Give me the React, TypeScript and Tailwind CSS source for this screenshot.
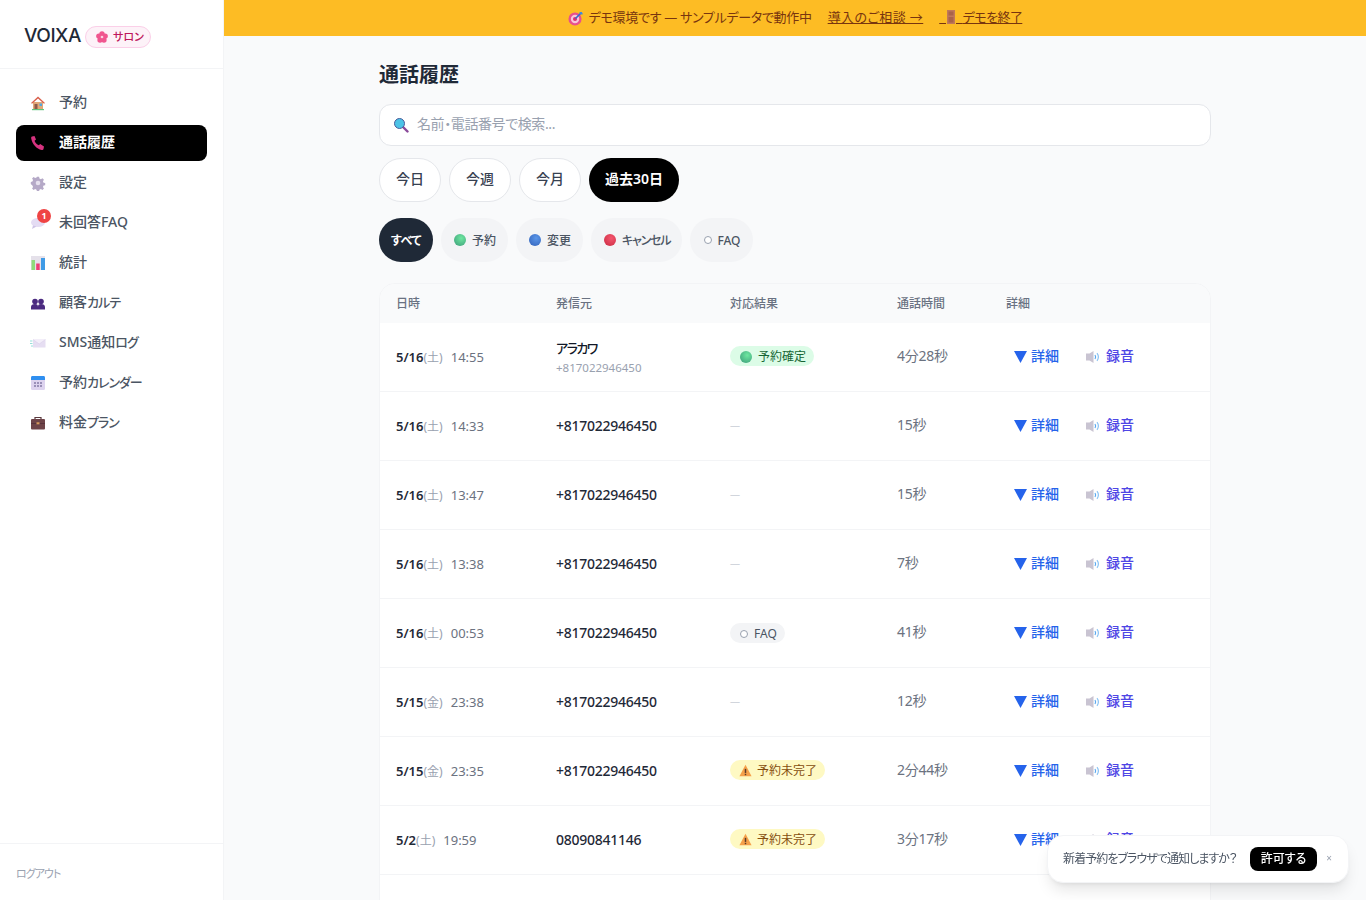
import type { ReactNode } from 'react';

const FONT = { fontFamily: '"Noto Sans", "Noto Sans CJK JP", sans-serif', fontFeatureSettings: '"palt"' };

const House = () => (
  <svg width="16" height="16" viewBox="0 0 16 16">
    <rect x="2" y="14" width="12" height="1.2" fill="#5fc47f" />
    <path d="M3 7h10v7H3z" fill="#e2a878" />
    <path d="M8 1.5 15 8l-1 .8L8 3.4 2 8.800 1 8z" fill="#d9604c" />
    <rect x="4.500" y="9" width="3" height="5" fill="#8d5a4a" />
    <rect x="9.500" y="8.500" width="2.500" height="2.500" fill="#4fa8e0" />
  </svg>
);

const Phone = () => (
  <svg width="16" height="16" viewBox="0 0 16 16">
    <path d="M2 1.500 4.500 1l1.500 3.500-1.500 1.200c.8 2 2.300 3.600 4.300 4.600l1.400-1.300L14 11.500 13.500 14c-.2.800-1 1.200-1.800 1C6.500 13.800 2.500 9.500 1.200 3.500 1 2.600 1.300 1.800 2 1.500Z" fill="#d6337f" />
  </svg>
);

const Gear = () => (
  <svg width="16" height="16" viewBox="0 0 16 16">
    <path d="M6.800 1h2.400l.4 2 1.600.7 1.700-1.100 1.700 1.700-1.100 1.700.7 1.600 1.800.4v2.400l-1.800.4-.7 1.600 1.100 1.700-1.700 1.700-1.700-1.100-1.600.7-.4 1.800H6.800l-.4-1.800-1.600-.7-1.700 1.100-1.700-1.700 1.100-1.700-.7-1.600L0 9.200V6.800l1.800-.4.700-1.600-1.100-1.700 1.700-1.700 1.700 1.100 1.600-.7Z" fill="#b5a9c7" transform="translate(.8 .8) scale(.9)" />
    <circle cx="8" cy="8" r="2.300" fill="#e6e0ee" />
  </svg>
);

const Bubble = () => (
  <svg width="16" height="16" viewBox="0 0 16 16">
    <ellipse cx="8" cy="7.500" rx="7" ry="4.500" fill="#e4dcf3" />
    <path d="M3 10.500 2 14l4.500-2.500Z" fill="#cfc4e6" />
  </svg>
);

const Chart = () => (
  <svg width="16" height="16" viewBox="0 0 16 16">
    <rect x="1" y="1" width="14" height="14" fill="#e5e1ea" />
    <rect x="1.500" y="5" width="3.500" height="10" fill="#8fdc7a" />
    <rect x="6.200" y="8.500" width="3.500" height="6.500" fill="#ef3f74" />
    <rect x="11" y="3" width="4" height="12" fill="#3f9be6" />
  </svg>
);

const Busts = () => (
  <svg width="16" height="16" viewBox="0 0 16 16">
    <circle cx="5" cy="6.500" r="2.800" fill="#4b2a80" />
    <circle cx="11" cy="6.500" r="2.800" fill="#4b2a80" />
    <path d="M1 14.500v-2.500C1 10.300 2.500 9 5 9s3 1.300 3 3v2.500ZM8 14.500v-2.500c0-1.700.5-3 3-3s4 1.300 4 3v2.500Z" fill="#4b2a80" />
  </svg>
);

const Envelope = () => (
  <svg width="16" height="16" viewBox="0 0 16 16">
    <rect x="3" y="4.500" width="12.500" height="8" fill="#e6def2" />
    <path d="m3 4.500 6.200 4.500 6.300-4.500" fill="#f3eef9" stroke="#d6cae8" strokeWidth=".5" />
    <path d="M0 6h2.500M0 8.500h2.500M1 11h2" stroke="#7fd6d0" strokeWidth=".8" />
  </svg>
);

const Calendar = () => (
  <svg width="16" height="16" viewBox="0 0 16 16">
    <rect x="1" y="1" width="14" height="14" rx="1.500" fill="#ddd3ef" />
    <path d="M1 5V2.500C1 1.700 1.700 1 2.500 1h11c.8 0 1.500.7 1.500 1.500V5Z" fill="#2f8ff0" />
    <path d="M4 7h2v2H4zM7 7h2v2H7zM10 7h2v2h-2zM4 10h2v2H4zM7 10h2v2H7zM10 10h2v2h-2z" fill="#9a90b8" />
  </svg>
);

const Briefcase = () => (
  <svg width="16" height="16" viewBox="0 0 16 16">
    <path d="M5 4V2.500h6V4" fill="none" stroke="#5a3a3e" strokeWidth="1.200" />
    <rect x="1" y="4" width="14" height="10.500" rx="1" fill="#6e4348" />
    <rect x="1" y="8" width="14" height=".8" fill="#54303a" />
    <rect x="6.500" y="7.300" width="3" height="2" fill="#d79a5c" />
  </svg>
);

const Magnifier = () => (
  <svg width="16" height="16" viewBox="0 0 16 16">
    <path d="m10 10 4.500 4.500" stroke="#8a4a9a" strokeWidth="2.400" strokeLinecap="round" />
    <circle cx="6.500" cy="6.500" r="5" fill="#4cc3e6" stroke="#4a5a9a" strokeWidth="1" />
  </svg>
);

const Dart = () => (
  <svg width="15" height="15" viewBox="0 0 16 16">
    <circle cx="7.500" cy="8.500" r="7" fill="#e8508c" />
    <circle cx="7.500" cy="8.500" r="4.500" fill="#f6c6dc" />
    <circle cx="7.500" cy="8.500" r="2.200" fill="#d92f70" />
    <path d="M8 8 14 2" stroke="#2f6fd0" strokeWidth="1.600" />
    <path d="m12 1 1 2 2 1 1-1-1-1V1Z" fill="#3f8be0" />
  </svg>
);

const Door = () => (
  <svg width="10" height="16" viewBox="3 0 10 16" className="inline align-[-3px]">
    <rect x="4" y="1" width="8" height="14" fill="#c0785a" />
    <rect x="5.500" y="2.500" width="5" height="4" fill="#a9634a" />
    <rect x="5.500" y="8" width="5" height="5.500" fill="#a9634a" />
  </svg>
);

const Warning = () => (
  <svg width="13" height="13" viewBox="0 0 16 16">
    <path d="M8 1 15.500 15H.5Z" fill="#f5a04a" />
    <rect x="7.100" y="6" width="1.800" height="5" fill="#5a3a2a" />
    <rect x="7.100" y="12" width="1.800" height="1.800" fill="#5a3a2a" />
  </svg>
);

const Speaker = () => (
  <svg width="14" height="14" viewBox="0 0 14 14">
    <path d="M0 3.500h3.500L7.500 1v12L3.500 10.500H0Z" fill="#c9c4d2" />
    <path d="M9 5c.8 1.200.8 2.800 0 4" fill="none" stroke="#5aa8ef" strokeWidth="1.200" />
    <path d="M11 3.200c1.700 2.300 1.700 5.300 0 7.600" fill="none" stroke="#8cc4f4" strokeWidth="1.200" />
  </svg>
);

const Blossom = () => (
  <svg width="12" height="12" viewBox="0 0 16 16">
    <circle cx="8" cy="3.800" r="3.600" fill="#f0568f" />
    <circle cx="12.200" cy="6.800" r="3.600" fill="#f0568f" />
    <circle cx="10.600" cy="12" r="3.600" fill="#f0568f" />
    <circle cx="5.400" cy="12" r="3.600" fill="#f0568f" />
    <circle cx="3.800" cy="6.800" r="3.600" fill="#f0568f" />
    <circle cx="8" cy="8" r="1.800" fill="#fbd0e0" />
  </svg>
);

const Ball = ({ from, to }: { from: string; to: string }) => (
  <span
    className="inline-block w-3 h-3 rounded-full shrink-0"
    style={{ background: `radial-gradient(circle at 60% 35%, ${from}, ${to})` }}
  />
);

const Hollow = () => <span className="inline-block w-2 h-2 rounded-full border border-gray-400 bg-white shrink-0" />;

// katakana sits tighter than the kanji around it
const Kana = ({ text }: { text: string }) => (
  <span className="pb-[2px]">
    {text.split(/([ァ-ヶー]+)/).map((part, i) =>
      i % 2 === 1 ? (
        <span key={i} className="text-[13px] tracking-[-1px]">
          {part}
        </span>
      ) : (
        part
      ),
    )}
  </span>
);

const NAV: { label: string; icon: ReactNode; active?: boolean; badge?: boolean }[] = [
  { label: '予約', icon: <House /> },
  { label: '通話履歴', icon: <Phone />, active: true },
  { label: '設定', icon: <Gear /> },
  { label: '未回答FAQ', icon: <Bubble />, badge: true },
  { label: '統計', icon: <Chart /> },
  { label: '顧客カルテ', icon: <Busts /> },
  { label: 'SMS通知ログ', icon: <Envelope /> },
  { label: '予約カレンダー', icon: <Calendar /> },
  { label: '料金プラン', icon: <Briefcase /> },
];

type Result = 'ok' | 'faq' | 'warn' | null;

const ROWS: { date: string; wd: string; time: string; name?: string; tel: string; result: Result; dur: string }[] = [
  { date: '5/16', wd: '(土)', time: '14:55', name: 'アラカワ', tel: '+817022946450', result: 'ok', dur: '4分28秒' },
  { date: '5/16', wd: '(土)', time: '14:33', tel: '+817022946450', result: null, dur: '15秒' },
  { date: '5/16', wd: '(土)', time: '13:47', tel: '+817022946450', result: null, dur: '15秒' },
  { date: '5/16', wd: '(土)', time: '13:38', tel: '+817022946450', result: null, dur: '7秒' },
  { date: '5/16', wd: '(土)', time: '00:53', tel: '+817022946450', result: 'faq', dur: '41秒' },
  { date: '5/15', wd: '(金)', time: '23:38', tel: '+817022946450', result: null, dur: '12秒' },
  { date: '5/15', wd: '(金)', time: '23:35', tel: '+817022946450', result: 'warn', dur: '2分44秒' },
  { date: '5/2', wd: '(土)', time: '19:59', tel: '08090841146', result: 'warn', dur: '3分17秒' },
];

const ResultBadge = ({ result }: { result: Result }) => {
  if (result === 'ok') {
    return (
      <span className="inline-flex items-center gap-[6px] h-5 pt-px pl-[10px] pr-2 rounded-full bg-[#dcfce7] text-[#166534] text-xs">
        <Ball from="#6ee7a0" to="#3a9a78" />
        予約確定
      </span>
    );
  }
  if (result === 'faq') {
    return (
      <span className="inline-flex items-center gap-[6px] h-5 pt-px pl-[10px] pr-2 rounded-full bg-[#f3f4f6] text-[#4b5563] text-xs">
        <Hollow />
        FAQ
      </span>
    );
  }
  if (result === 'warn') {
    return (
      <span className="inline-flex items-center gap-[5px] h-5 pt-px pl-[9px] pr-2 rounded-full bg-[#fef9c3] text-[#854d0e] text-xs">
        <Warning />
        予約未完了
      </span>
    );
  }
  return <span className="block pb-[2px] text-[10px] text-gray-300">—</span>;
};

export default function App() {
  return (
    <div className="flex h-screen overflow-hidden bg-[#f9fafb] text-[#1f2937]" style={FONT}>
      <aside className="w-[224px] shrink-0 bg-white border-r border-gray-100 flex flex-col">
        <div className="h-[69px] shrink-0 border-b border-gray-100 flex items-center gap-1 pl-6 pt-1">
          <span className="text-[19px] font-medium tracking-tight text-[#1f2937]" style={{ fontFamily: 'Inter, sans-serif' }}>VOIXA</span>
          <span className="mt-[2px] inline-flex items-center gap-[5px] h-[22px] pl-[10px] pr-[6px] rounded-full bg-[#fdf2f8] border border-[#fbcfe8] text-[11px] font-medium text-[#be185d]">
            <Blossom />
            サロン
          </span>
        </div>
        <nav className="flex-1 flex flex-col gap-1 pt-4 px-4">
          {NAV.map((item) => (
            <a
              key={item.label}
              className={`relative flex items-center gap-[13px] h-9 pl-[14px] rounded-lg text-sm ${
                item.active ? 'bg-black text-white font-semibold' : 'text-[#4b5563] font-medium'
              }`}
            >
              {item.icon}
              <Kana text={item.label} />
              {item.badge && (
                <span className="absolute left-[21px] top-1 w-[14px] h-[14px] rounded-full bg-[#ef4444] text-white text-[9px] font-bold flex items-center justify-center">
                  1
                </span>
              )}
            </a>
          ))}
        </nav>
        <div className="h-[57px] shrink-0 border-t border-gray-100 flex items-center pl-4 pt-1 text-[11px] text-gray-400">
          <span className="tracking-[-1px]">ログアウト</span>
        </div>
      </aside>

      <div className="flex-1 min-w-0 flex flex-col">
        <div className="h-9 shrink-0 bg-[#fdbc24] flex items-center justify-center gap-4 text-[13px] text-[#78350f]">
          <span className="flex items-center gap-[6px]">
            <Dart />
            <span className="tracking-[-0.3px]">デモ環境です — サンプルデータで動作中</span>
          </span>
          <a className="underline tracking-[0.4px]">導入のご相談 →</a>
          <a className="underline">
            {'\u00a0\u00a0'}
            <Door />
            {'\u00a0\u00a0'}
            <span className="tracking-[-0.6px]">デモを終了</span>
          </a>
        </div>

        <main className="flex-1 overflow-hidden">
          <div className="w-[832px] mx-auto pt-6">
            <h1 className="text-xl font-semibold h-[30px] leading-[30px]">通話履歴</h1>
            <div className="mt-[14px] h-[42px] flex items-center gap-2 px-[13px] bg-white border border-gray-200 rounded-xl text-sm text-gray-400">
              <Magnifier />
              <span className="pb-[2px] tracking-[-0.4px]">名前・電話番号で検索...</span>
            </div>
            <div className="mt-3 flex gap-2">
              {['今日', '今週', '今月'].map((t) => (
                <span key={t} className="h-11 px-4 pb-[2px] flex items-center bg-white border border-gray-200 rounded-full text-sm font-medium text-[#374151]">
                  {t}
                </span>
              ))}
              <span className="h-11 w-[90px] pb-[2px] justify-center flex items-center bg-black text-white rounded-full text-sm font-semibold">過去30日</span>
            </div>
            <div className="mt-4 flex gap-2">
              <span className="h-11 w-[54px] pt-[2px] justify-center flex items-center bg-[#1f2937] text-white rounded-full text-xs font-semibold tracking-[-0.5px]">すべて</span>
              <span className="h-11 pl-[13px] pr-3 flex items-center gap-[6px] bg-[#f3f4f6] rounded-full text-xs font-medium text-[#4b5563]">
                <Ball from="#6ee7a0" to="#3a9a78" />
                <span className="pt-[2px]">予約</span>
              </span>
              <span className="h-11 pl-[13px] pr-3 flex items-center gap-[6px] bg-[#f3f4f6] rounded-full text-xs font-medium text-[#4b5563]">
                <Ball from="#5a96e8" to="#2f5fb8" />
                <span className="pt-[2px]">変更</span>
              </span>
              <span className="h-11 pl-[13px] pr-3 flex items-center gap-[6px] bg-[#f3f4f6] rounded-full text-xs font-medium text-[#4b5563]">
                <Ball from="#f4566e" to="#c8283f" />
                <span className="pt-[2px] tracking-[-1.200px]">キャンセル</span>
              </span>
              <span className="h-11 pl-[14px] pr-3 flex items-center gap-[5px] bg-[#f3f4f6] rounded-full text-xs font-medium text-[#4b5563]">
                <Hollow />
                <span className="pt-[2px]">FAQ</span>
              </span>
            </div>

            <div className="mt-[21px] bg-white rounded-2xl border border-gray-100 overflow-hidden">
              <div className="h-[39px] bg-[#f9fafb] grid grid-cols-[160px_174px_167px_109px_1fr] items-center pl-4 text-xs text-gray-500 font-medium">
                <span>日時</span>
                <span>発信元</span>
                <span>対応結果</span>
                <span>通話時間</span>
                <span>詳細</span>
              </div>
              {ROWS.map((row, i) => (
                <div key={i} className="h-[69px] border-b border-gray-100 grid grid-cols-[160px_174px_167px_109px_1fr] items-center pl-4 text-sm">
                  <span className="text-[13px] text-[#6b7280]">
                    <span className="font-semibold text-[#1f2937]">{row.date}</span>
                    <span className="text-xs text-gray-400">{row.wd}</span>
                    <span className="ml-2">{row.time}</span>
                  </span>
                  {row.name ? (
                    <span className="flex flex-col pt-[2px]">
                      <span className="text-[13px] font-medium text-[#111827] leading-5 tracking-[-1.500px]">{row.name}</span>
                      <span className="text-[11.500px] text-gray-400 leading-5">{row.tel}</span>
                    </span>
                  ) : (
                    <span className="font-medium tracking-[-0.25px]">{row.tel}</span>
                  )}
                  <span>
                    <ResultBadge result={row.result} />
                  </span>
                  <span className="pb-[2px] tracking-[-0.25px] text-[#6b7280]">{row.dur}</span>
                  <span className="flex items-center pl-2 font-medium">
                    <span className="flex items-center gap-[6px] text-[#2563eb]">
                      <svg width="13" height="12" viewBox="0 0 13 12" className="mr-[-2px]">
                        <path d="M0 0h13L6.500 12Z" fill="#2563eb" />
                      </svg>
                      <span className="pb-[2px]">詳細</span>
                    </span>
                    <span className="flex items-center gap-[6px] ml-[27px] text-[#4f46e5]">
                      <Speaker />
                      <span className="pb-[2px]">録音</span>
                    </span>
                  </span>
                </div>
              ))}
              <div className="h-[69px] pl-4 grid grid-cols-[160px_174px_167px_109px_1fr] items-center">
                <span />
                <span />
                <span className="h-5 w-[95px] rounded-full bg-[#fef9c3]" />
              </div>
            </div>
          </div>
        </main>
      </div>

      <div className="fixed right-[17px] bottom-[17px] h-[48px] flex items-center pl-[15px] pr-4 bg-white border border-gray-100 rounded-2xl shadow-lg text-xs text-[#4b5563]">
        <span className="tracking-[-0.95px]">新着予約をブラウザで通知しますか？</span>
        <span className="ml-[13px] h-6 px-[11px] flex items-center rounded-lg bg-black text-white font-medium">許可する</span>
        <span className="ml-[9px] text-[10px] text-gray-400">×</span>
      </div>
    </div>
  );
}
